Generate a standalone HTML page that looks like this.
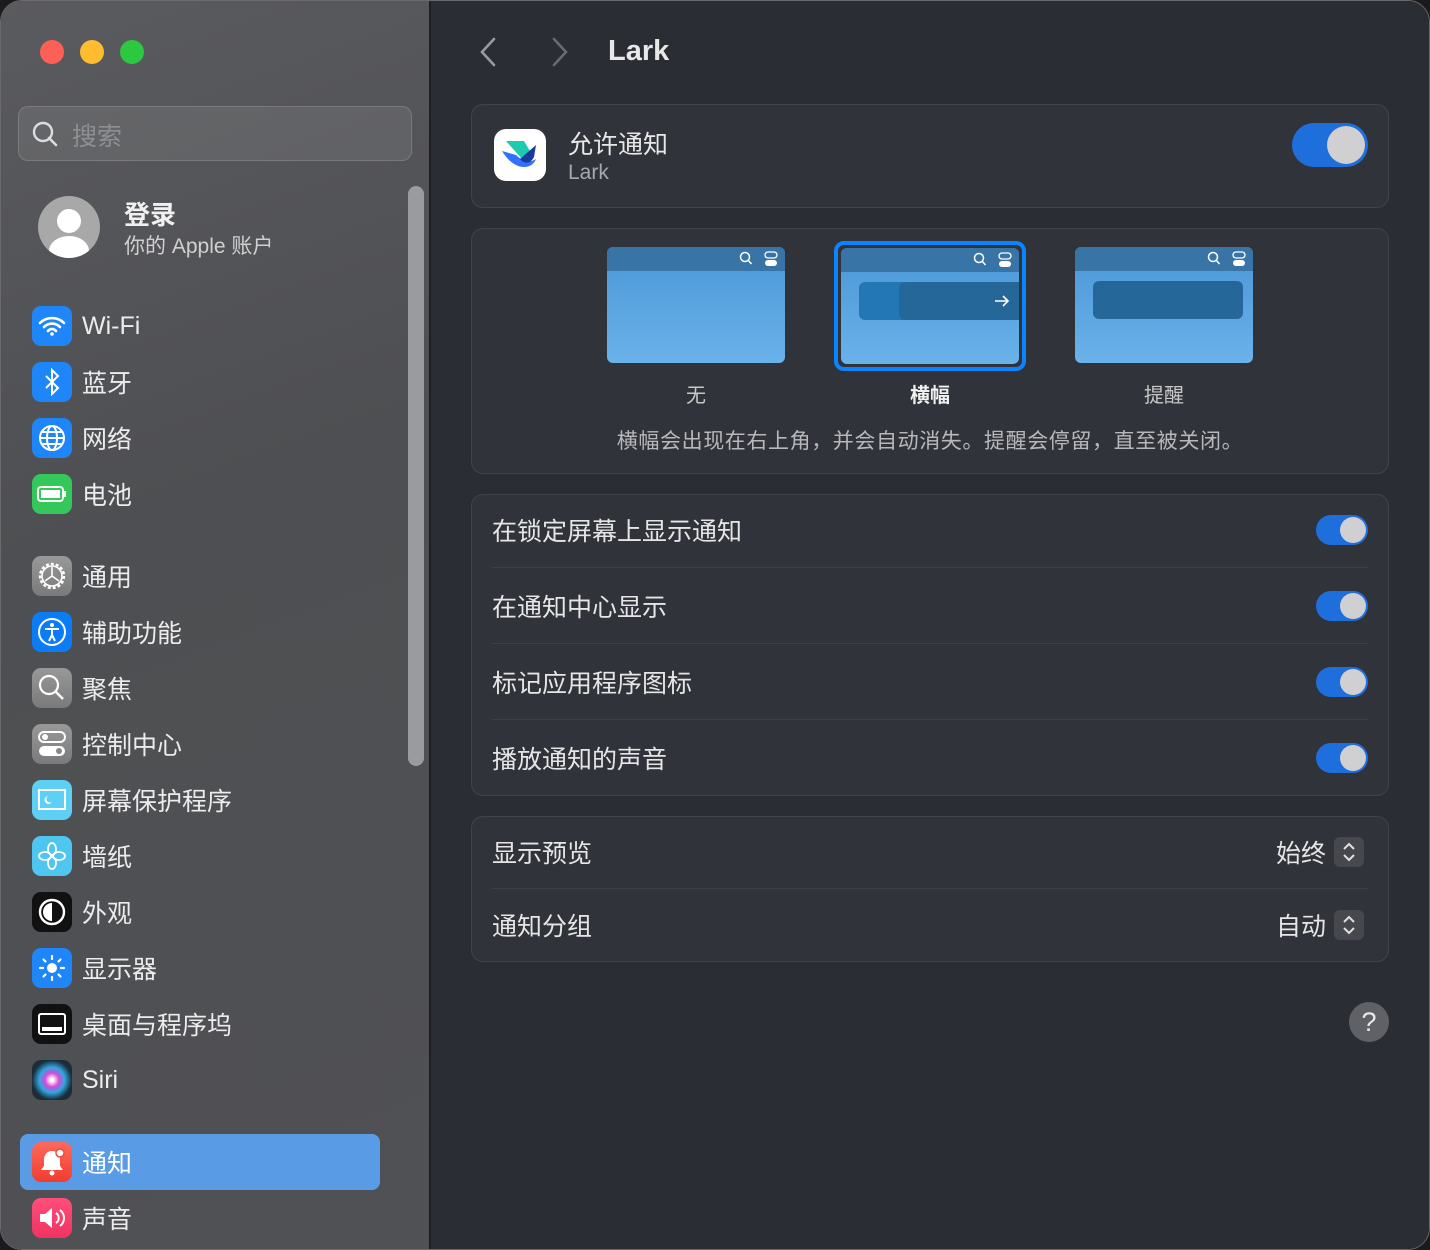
<!DOCTYPE html>
<html><head><meta charset="utf-8"><style>
*{margin:0;padding:0;box-sizing:border-box}
body{width:1430px;height:1250px;background:#1b1b1d;font-family:"Liberation Sans","Noto Sans CJK SC",sans-serif;overflow:hidden;position:relative}
.win{position:absolute;left:0;top:0;width:1430px;height:1250px;border-radius:22px;overflow:hidden;border:1px solid #6a6a6c}
.side{position:absolute;left:-1px;top:-1px;width:431px;height:1250px;background:linear-gradient(160deg,#5a5b5f,#4e4f52 40%,#505154)}
.main{position:absolute;left:428px;top:-1px;width:1002px;height:1250px;background:#2b2d34;border-left:2px solid #1e1f22}
.a{position:absolute}
.dot{position:absolute;top:40px;width:24px;height:24px;border-radius:50%}
.item{position:absolute;left:32px;height:40px;display:flex;align-items:center;color:#ececec;font-size:25px}
.ic{width:40px;height:40px;border-radius:9px;margin-right:10px;display:flex;align-items:center;justify-content:center;flex:none}
.card{position:absolute;left:42px;width:918px;background:#31333a;border:1.5px solid #41434a;border-radius:12px}
.row{position:absolute;left:20px;right:20px;height:76px;display:flex;align-items:center;color:#e6e6e6;font-size:25px;border-bottom:1.5px solid #3e4047}
.tg{position:absolute;right:0;width:52px;height:30px;border-radius:15px;background:#1e6fdc}
.tg::after{content:"";position:absolute;right:2px;top:2px;width:26px;height:26px;border-radius:50%;background:#d0d0d2}
.thumb{position:absolute;top:18px;width:178px;height:116px;border-radius:6px;background:linear-gradient(#4a96d6,#6ab2ea);overflow:hidden}
.thumb .bar{height:24px;background:#3874a6;position:relative}
.lab{position:absolute;top:152px;font-size:20px;color:#c8c8c8;text-align:center;width:178px}
.st{display:inline-flex;width:30px;height:30px;background:#46484e;border-radius:6px;margin-left:8px;align-items:center;justify-content:center}
.bi{position:absolute;right:6px;top:4px}
</style></head><body><div class="win">
<div class="side">
<div class="dot" style="left:40px;background:#fe5f57"></div>
<div class="dot" style="left:80px;background:#febc2e"></div>
<div class="dot" style="left:120px;background:#2bc840"></div>
<div class="a" style="left:18px;top:106px;width:394px;height:55px;border-radius:10px;background:rgba(255,255,255,0.08);border:1px solid rgba(255,255,255,0.15)"></div>
<svg class="a" style="left:31px;top:120px" width="28" height="28"><circle cx="12" cy="12" r="9" fill="none" stroke="#ddd" stroke-width="2.4"/><path d="M18 18l7 7" stroke="#ddd" stroke-width="2.6" stroke-linecap="round"/></svg>
<div class="a" style="left:72px;top:117px;font-size:25px;color:#8e8f92">搜索</div>
<div class="a" style="left:38px;top:196px;width:62px;height:62px;border-radius:50%;background:#a8a8a8;overflow:hidden"><div class="a" style="left:19px;top:13px;width:24px;height:24px;border-radius:50%;background:#fff"></div><div class="a" style="left:11px;top:40px;width:40px;height:30px;border-radius:50%;background:#fff"></div></div>
<div class="a" style="left:124px;top:195px;font-size:26px;font-weight:bold;color:#f0f0f0">登录</div>
<div class="a" style="left:124px;top:230px;font-size:21px;color:#d0d0d0">你的 Apple 账户</div>
<div class="a" style="left:408px;top:186px;width:16px;height:580px;border-radius:8px;background:#9a9b9e"></div>

<div class="item" style="top:306px"><div class="ic" style="background:#1f86fa"><svg width="28" height="22"><path d="M2 8a17 17 0 0 1 24 0M6 12a11 11 0 0 1 16 0M10 16a5 5 0 0 1 8 0" fill="none" stroke="#fff" stroke-width="2.6" stroke-linecap="round"/><circle cx="14" cy="19" r="1.8" fill="#fff"/></svg></div>Wi-Fi</div>
<div class="item" style="top:362px"><div class="ic" style="background:#1f86fa"><svg width="20" height="28"><path d="M4 8l12 12-6 6V2l6 6L4 20" fill="none" stroke="#fff" stroke-width="2"/></svg></div>蓝牙</div>
<div class="item" style="top:418px"><div class="ic" style="background:#1f86fa"><svg width="30" height="30"><circle cx="15" cy="15" r="12" fill="none" stroke="#fff" stroke-width="2"/><ellipse cx="15" cy="15" rx="5" ry="12" fill="none" stroke="#fff" stroke-width="2"/><path d="M3 15h24M5 9h20M5 21h20" stroke="#fff" stroke-width="2"/></svg></div>网络</div>
<div class="item" style="top:474px"><div class="ic" style="background:#34c759"><svg width="30" height="16"><rect x="1" y="1" width="25" height="14" rx="3" fill="none" stroke="#fff" stroke-width="2"/><rect x="4" y="4" width="19" height="8" fill="#fff"/><rect x="27" y="5" width="2" height="6" fill="#fff"/></svg></div>电池</div>

<div class="item" style="top:556px"><div class="ic" style="background:linear-gradient(#999,#7a7a7c)"><svg width="32" height="32"><circle cx="16" cy="16" r="12" fill="none" stroke="#fff" stroke-width="2.4" stroke-dasharray="3 2"/><circle cx="16" cy="16" r="10" fill="none" stroke="#fff" stroke-width="1.6"/><path d="M16 16V7M16 16l-7 5M16 16l7 5" stroke="#fff" stroke-width="1.6"/></svg></div>通用</div>
<div class="item" style="top:612px"><div class="ic" style="background:#0a7cf5"><svg width="32" height="32"><circle cx="16" cy="16" r="13" fill="none" stroke="#fff" stroke-width="2"/><circle cx="16" cy="9" r="2" fill="#fff"/><path d="M9 13h14M16 13v6l-3 6M16 19l3 6" stroke="#fff" stroke-width="2" fill="none"/></svg></div>辅助功能</div>
<div class="item" style="top:668px"><div class="ic" style="background:linear-gradient(#999,#7a7a7c)"><svg width="30" height="30"><circle cx="12" cy="12" r="9" fill="none" stroke="#fff" stroke-width="2.2"/><path d="M19 19l7 7" stroke="#fff" stroke-width="2.4"/></svg></div>聚焦</div>
<div class="item" style="top:724px"><div class="ic" style="background:linear-gradient(#999,#7a7a7c)"><svg width="30" height="28"><rect x="2" y="2" width="26" height="10" rx="5" fill="none" stroke="#fff" stroke-width="2"/><circle cx="8" cy="7" r="3" fill="#fff"/><rect x="2" y="16" width="26" height="10" rx="5" fill="#fff"/><circle cx="22" cy="21" r="3" fill="#888"/></svg></div>控制中心</div>
<div class="item" style="top:780px"><div class="ic" style="background:#5fd0f5"><svg width="30" height="24"><rect x="2" y="2" width="26" height="19" fill="none" stroke="#fff" stroke-width="2"/><path d="M11 8a4 4 0 1 0 4 6a3 3 0 0 1-4-6z" fill="#fff"/></svg></div>屏幕保护程序</div>
<div class="item" style="top:836px"><div class="ic" style="background:#4fc6f0"><svg width="30" height="30"><g fill="none" stroke="#fff" stroke-width="1.8"><ellipse cx="15" cy="8" rx="4" ry="6"/><ellipse cx="15" cy="22" rx="4" ry="6"/><ellipse cx="8" cy="15" rx="6" ry="4"/><ellipse cx="22" cy="15" rx="6" ry="4"/></g></svg></div>墙纸</div>
<div class="item" style="top:892px"><div class="ic" style="background:#111"><svg width="30" height="30"><circle cx="15" cy="15" r="12" fill="none" stroke="#fff" stroke-width="2.4"/><path d="M15 6a9 9 0 0 0 0 18z" fill="#fff"/></svg></div>外观</div>
<div class="item" style="top:948px"><div class="ic" style="background:#1f86fa"><svg width="30" height="30"><circle cx="15" cy="15" r="5" fill="#fff"/><g stroke="#fff" stroke-width="2.2" stroke-linecap="round"><path d="M15 3v3M15 24v3M3 15h3M24 15h3M6.5 6.5l2 2M21.5 21.5l2 2M6.5 23.5l2-2M21.5 8.5l2-2"/></g></svg></div>显示器</div>
<div class="item" style="top:1004px"><div class="ic" style="background:#111"><svg width="30" height="24"><rect x="2" y="2" width="26" height="20" rx="2" fill="none" stroke="#fff" stroke-width="2"/><rect x="5" y="15" width="20" height="4" fill="#fff"/></svg></div>桌面与程序坞</div>
<div class="item" style="top:1060px"><div class="ic" style="background:radial-gradient(circle,#fff 5%,#d24bd8 25%,#2ea7e0 45%,#1c2d3a 70%)"></div>Siri</div>
<div class="a" style="left:20px;top:1134px;width:360px;height:56px;border-radius:8px;background:#5a9be6"></div>
<div class="item" style="top:1142px"><div class="ic" style="background:linear-gradient(#ff6a5c,#f03c2e)"><svg width="28" height="30"><path d="M14 4c-5 0-8 4-8 9v6l-3 4h22l-3-4v-6c0-5-3-9-8-9z" fill="#fff"/><circle cx="14" cy="26" r="2.5" fill="#fff"/><circle cx="22" cy="6" r="4" fill="#fff" stroke="#f04a3e" stroke-width="1.5"/></svg></div><span style="color:#fff">通知</span></div>
<div class="item" style="top:1198px"><div class="ic" style="background:linear-gradient(#ff4f7a,#f03360)"><svg width="30" height="26"><path d="M3 9h5l7-6v20l-7-6H3z" fill="#fff"/><path d="M19 8a6 6 0 0 1 0 10M23 5a10 10 0 0 1 0 16" fill="none" stroke="#fff" stroke-width="2"/></svg></div>声音</div>
</div>

<div class="main">
<svg class="a" style="left:47px;top:37px" width="20" height="30"><path d="M16 2L4 15l12 13" fill="none" stroke="#9a9ba0" stroke-width="2.6" stroke-linecap="round"/></svg>
<svg class="a" style="left:119px;top:37px" width="20" height="30"><path d="M4 2l12 13L4 28" fill="none" stroke="#6a6b70" stroke-width="2.6" stroke-linecap="round"/></svg>
<div class="a" style="left:177px;top:35px;font-size:29px;font-weight:bold;color:#e8e8e8">Lark</div>

<div class="card" style="top:104px;height:104px">
<div class="a" style="left:22px;top:24px;width:52px;height:52px;border-radius:12px;background:#fff"><svg width="52" height="52"><path d="M12 12h18l6 10-8 8z" fill="#1fc9b0"/><path d="M8 22c6 10 14 16 22 16 6 0 10-3 12-8-6 4-14 2-20-4z" fill="#3370ff"/><path d="M26 30l16-14-2 12c-3 6-9 8-14 2z" fill="#1a3a9c"/></svg></div>
<div class="a" style="left:96px;top:20px;font-size:25px;color:#e8e8e8">允许通知</div>
<div class="a" style="left:96px;top:56px;font-size:21px;color:#a8a8ac">Lark</div>
<div class="a" style="right:20px;top:18px;width:76px;height:44px;border-radius:22px;background:#1e6fdc"><div class="a" style="right:3px;top:3px;width:38px;height:38px;border-radius:50%;background:#d0d0d2"></div></div>
</div>

<div class="card" style="top:228px;height:246px">
<div class="thumb" style="left:135px"><div class="bar"><svg class="bi" width="40" height="16"><circle cx="6" cy="6" r="4.5" fill="none" stroke="#fff" stroke-width="1.5"/><path d="M9 9l3.5 4" stroke="#fff" stroke-width="1.5"/><rect x="26" y="1" width="12" height="6" rx="3" fill="none" stroke="#fff" stroke-width="1.3"/><rect x="26" y="9" width="12" height="6" rx="3" fill="#fff"/></svg></div></div>
<div class="a" style="left:362px;top:12px;width:192px;height:130px;border-radius:10px;border:4px solid #0a84ff"></div>
<div class="thumb" style="left:369px;top:19px;height:116px;width:178px"><div class="bar"><svg class="bi" width="40" height="16"><circle cx="6" cy="6" r="4.5" fill="none" stroke="#fff" stroke-width="1.5"/><path d="M9 9l3.5 4" stroke="#fff" stroke-width="1.5"/><rect x="26" y="1" width="12" height="6" rx="3" fill="none" stroke="#fff" stroke-width="1.3"/><rect x="26" y="9" width="12" height="6" rx="3" fill="#fff"/></svg></div><div class="a" style="left:18px;top:34px;width:170px;height:38px;border-radius:6px;background:#2377b5"></div><div class="a" style="left:58px;top:34px;width:130px;height:38px;border-radius:6px;background:#26679a"><svg class="a" style="left:95px;top:12px" width="16" height="14"><path d="M1 7h13M9 2l5 5-5 5" fill="none" stroke="#fff" stroke-width="1.6"/></svg></div></div>
<div class="thumb" style="left:603px"><div class="bar"><svg class="bi" width="40" height="16"><circle cx="6" cy="6" r="4.5" fill="none" stroke="#fff" stroke-width="1.5"/><path d="M9 9l3.5 4" stroke="#fff" stroke-width="1.5"/><rect x="26" y="1" width="12" height="6" rx="3" fill="none" stroke="#fff" stroke-width="1.3"/><rect x="26" y="9" width="12" height="6" rx="3" fill="#fff"/></svg></div><div class="a" style="left:18px;top:34px;width:150px;height:38px;border-radius:6px;background:#26679a"></div></div>
<div class="lab" style="left:135px;top:150px">无</div>
<div class="lab" style="left:369px;top:150px;color:#f0f0f0;font-weight:bold">横幅</div>
<div class="lab" style="left:603px;top:150px">提醒</div>
<div class="a" style="left:0;width:916px;top:196px;text-align:center;font-size:21px;letter-spacing:0.6px;color:#b8b8bc">横幅会出现在右上角，并会自动消失。提醒会停留，直至被关闭。</div>
</div>

<div class="card" style="top:494px;height:302px">
<div class="row" style="top:-3px"><span>在锁定屏幕上显示通知</span><div class="tg"></div></div>
<div class="row" style="top:73px"><span>在通知中心显示</span><div class="tg"></div></div>
<div class="row" style="top:149px"><span>标记应用程序图标</span><div class="tg"></div></div>
<div class="row" style="top:225px;border:none"><span>播放通知的声音</span><div class="tg"></div></div>
</div>

<div class="card" style="top:816px;height:146px">
<div class="row" style="top:-2px;height:74px"><span>显示预览</span><span style="position:absolute;right:4px;display:flex;align-items:center">始终<span class="st"><svg width="14" height="22"><path d="M2 8l5-5 5 5M2 14l5 5 5-5" fill="none" stroke="#e0e0e0" stroke-width="2"/></svg></span></span></div>
<div class="row" style="top:72px;height:72px;border:none"><span>通知分组</span><span style="position:absolute;right:4px;display:flex;align-items:center">自动<span class="st"><svg width="14" height="22"><path d="M2 8l5-5 5 5M2 14l5 5 5-5" fill="none" stroke="#e0e0e0" stroke-width="2"/></svg></span></span></div>
</div>
<style>.card{left:40px}</style>

<div class="a" style="left:918px;top:1002px;width:40px;height:40px;border-radius:50%;background:#606166;color:#e8e8e8;font-size:27px;text-align:center;line-height:40px">?</div>
</div>
</div></body></html>
